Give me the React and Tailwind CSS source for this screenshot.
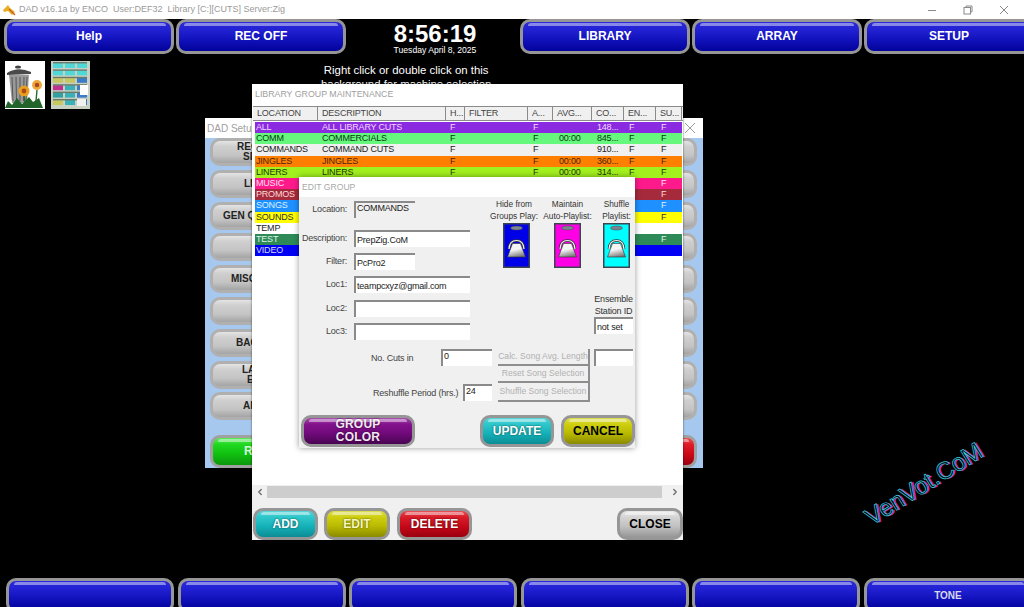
import React from "react";
import { ChevronLeft, ChevronRight } from "lucide-react";

const TONES = {
  blue: "bg-[linear-gradient(#2a2ad8_0%,#2222d4_26%,#1212bc_60%,#02029a_100%)] text-white",
  teal: "bg-[linear-gradient(#58d4d8_0%,#30c8cc_22%,#14b0b8_60%,#0c8c94_100%)] text-white [text-shadow:0_0_2px_#044]",
  yellow: "bg-[linear-gradient(#dcdc50_0%,#cfcf10_24%,#b8b800_60%,#8a8a00_100%)] text-[#f6f6c0] [text-shadow:0_0_2px_#440]",
  yellowDark: "bg-[linear-gradient(#dcdc50_0%,#cfcf10_24%,#b8b800_60%,#8a8a00_100%)] text-black",
  red: "bg-[linear-gradient(#e85058_0%,#d81c28_24%,#c40818_60%,#9a0010_100%)] text-white [text-shadow:0_0_2px_#400]",
  purple: "bg-[linear-gradient(#a850b0_0%,#84128c_24%,#700a7a_60%,#480452_100%)] text-[#f4e6f4] [text-shadow:0_0_2px_#202]",
  gray: "bg-[linear-gradient(#e8e8e8_0%,#d4d4d4_24%,#c0c0c0_60%,#969696_100%)] text-black",
  setup: "!border-[#b0b0b0] bg-[linear-gradient(#e4e4e4_0%,#cfcfcf_24%,#c4c4c4_65%,#a4a4a4_100%)] text-[#222]",
  green: "!border-[#a0a0a0] bg-[linear-gradient(#60e860_0%,#20d820_24%,#10c010_60%,#0c960c_100%)] text-[#d8f8d8]",
  redSoft: "!border-[#a0a0a0] bg-[linear-gradient(#e85058_0%,#e01c28_24%,#cc0818_60%,#9a0010_100%)] text-white",
};

const TXT = "text-[9px] tracking-[-0.2px]";

function Gloss({ tone, className, children }) {
  return (
    <div
      className={`relative shrink-0 flex items-center justify-center rounded-[10px] border-[3px] border-[#969696] font-bold text-[12px] leading-[13px] text-center ${TONES[tone]} ${className}`}
    >
      {tone !== "setup" && (
        <span className="absolute top-[1px] right-[5px] left-[5px] h-[3px] rounded-t-[6px] bg-white/45" />
      )}
      {children}
    </div>
  );
}

const ROWS = [
  ["ALL", "ALL LIBRARY CUTS", "F", "F", "", "148...", "F", "F", "bg-[#8a2be2] text-[#f2d8ff]"],
  ["COMM", "COMMERCIALS", "F", "F", "00:00", "845...", "F", "F", "bg-[#66f87c] text-[#0a3a14]"],
  ["COMMANDS", "COMMAND CUTS", "F", "F", "", "910...", "F", "F", "bg-[#f0f0f0] text-[#222]"],
  ["JINGLES", "JINGLES", "F", "F", "00:00", "360...", "F", "F", "bg-[#ff8000] text-[#4a2400]"],
  ["LINERS", "LINERS", "F", "F", "00:00", "314...", "F", "F", "bg-[#a2f01e] text-[#1c3c00]"],
  ["MUSIC", "", "", "", "", "", "", "F", "bg-[#ff1a8c] text-[#ffe0f0]"],
  ["PROMOS", "", "", "", "", "", "", "F", "bg-[#a52a3c] text-[#fbdada]"],
  ["SONGS", "", "", "", "", "", "", "F", "bg-[#1e90ff] text-[#dff0ff]"],
  ["SOUNDS", "", "", "", "", "", "", "F", "bg-[#ffff00] text-[#333]"],
  ["TEMP", "", "", "", "", "", "", "", "bg-white text-[#222]"],
  ["TEST", "", "", "", "", "", "", "F", "bg-[#2e8b57] text-[#dff5e6]"],
  ["VIDEO", "", "", "", "", "", "", "", "bg-[#0000f5] text-[#d8d8ff]"],
];

const HEAD = [
  ["LOCATION", "w-[65px]"],
  ["DESCRIPTION", "w-[128px]"],
  ["H...", "w-[19px]"],
  ["FILTER", "w-[63px]"],
  ["A...", "w-[25px]"],
  ["AVG...", "w-[39px]"],
  ["CO...", "w-[32px]"],
  ["EN...", "w-[32px]"],
  ["SU...", "w-[26px]"],
];

function Row({ r }) {
  return (
    <div className={`flex h-[11.2px] items-center leading-[11px] ${TXT} ${r[8]}`}>
      <span className="w-[63px] pl-[1px]">{r[0]}</span>
      <span className="w-[128px] pl-[4px]">{r[1]}</span>
      <span className="w-[19px] pl-[4px]">{r[2]}</span>
      <span className="w-[63px]"></span>
      <span className="w-[25px] pl-[5px]">{r[3]}</span>
      <span className="w-[39px] pl-[6px]">{r[4]}</span>
      <span className="w-[32px] pl-[5px]">{r[5]}</span>
      <span className="w-[32px] pl-[5px]">{r[6]}</span>
      <span className="w-[26px] pl-[5px]">{r[7]}</span>
    </div>
  );
}

function TrashIcon() {
  return (
    <svg width="40" height="48" viewBox="0 0 40 48" className="shrink-0">
      <rect width="40" height="48" fill="#fff" />
      <ellipse cx="13" cy="6" rx="3" ry="1.6" fill="#444" />
      <path d="M2 12 Q13 5 26 11 L26 13 L2 14 Z" fill="#4a4a4a" />
      <path d="M4 14 H24 L22 42 H7 Z" fill="#9a9a9a" />
      <path d="M7 16 L8 40 M11 16 L11.5 40 M15 16 L15 40 M19 16 L18.5 40 M22 16 L21 40" stroke="#555" strokeWidth="1" />
      <path d="M0 47 L3 40 L7 44 L12 37 L17 43 L24 36 L28 41 L34 37 L38 47 Z" fill="#23642a" />
      <circle cx="19" cy="30" r="5.5" fill="#e8a020" />
      <circle cx="19" cy="30" r="2.4" fill="#b04a10" />
      <circle cx="32" cy="24" r="5" fill="#eda838" />
      <circle cx="32" cy="24" r="2.2" fill="#a8442c" />
      <path d="M32 29 L31 40 M19 35 L20 41" stroke="#256b2c" strokeWidth="1.4" />
    </svg>
  );
}

function GridIcon() {
  const rows = ["#4fd8d8", "#4fd8d8", "#c8c860", "#c03090", "#30a0a0", "#c8c860"];
  return (
    <svg width="39" height="48" viewBox="0 0 39 48" className="shrink-0">
      <rect width="39" height="48" fill="#c8d0c4" />
      {rows.map((c, i) => (
        <g key={i}>
          <rect x="2" y={2 + i * 7.4} width="10" height="5" fill={c} />
          <rect x="14" y={2 + i * 7.4} width="10" height="5" fill={i > 2 ? "#3ab0b8" : c} />
          <rect x="26" y={2 + i * 7.4} width="10" height="5" fill={i > 1 ? "#3a7cc8" : c} />
          <rect x="2" y={1 + i * 7.4} width="34" height="1.4" fill="#6a7a6a" />
        </g>
      ))}
      <rect x="29" y="24" width="8" height="10" fill="#fff" />
      <rect x="26" y="38" width="9" height="7" fill="#f0f0f0" />
    </svg>
  );
}

function Bin({ color, gid }) {
  return (
    <svg width="27" height="45" viewBox="0 0 27 45" className="shrink-0">
      <defs>
        <linearGradient id={gid} x1="0.3" y1="0" x2="0.6" y2="1">
          <stop offset="0.45" stopColor="#f4f4f4" />
          <stop offset="1" stopColor="#777" />
        </linearGradient>
      </defs>
      <rect x="0.75" y="0.75" width="25.5" height="43.5" fill={color} stroke="#3c4450" strokeWidth="1.5" />
      <ellipse cx="13.5" cy="5" rx="6" ry="2" fill="#7c8490" stroke="#444" strokeWidth="0.5" />
      <path d="M6 26 Q6.5 17.5 13.5 17.5 Q20.5 17.5 21 26" fill="none" stroke="#333" strokeWidth="2.6" />
      <path d="M6 26 Q6.5 17.5 13.5 17.5 Q20.5 17.5 21 26" fill="none" stroke="#f4f4f4" strokeWidth="1.2" />
      <path d="M9.5 20.5 H17.5 L22.5 34 H4.5 Z" fill={`url(#${gid})`} stroke="#333" strokeWidth="0.6" />
    </svg>
  );
}

function Input({ className, children, gray }) {
  return (
    <div
      className={`flex items-center border-t-2 border-l-2 border-[#8a8a8a] pl-[1px] leading-[10px] text-[#222] ${TXT} ${gray ? "bg-[#f0f0f0]" : "bg-white"} ${className}`}
    >
      {children}
    </div>
  );
}

function Field({ label, className, children }) {
  return (
    <div className={`flex items-center gap-[7px] ${className}`}>
      <span className={`w-[48px] pt-[1px] text-right text-[#444] ${TXT}`}>{label}</span>
      {children}
    </div>
  );
}

function OffButton({ children, className }) {
  return (
    <div className={`flex w-[92px] items-center justify-center border-r-2 border-b-2 border-[#8e8e8e] text-[8.6px] whitespace-nowrap text-[#b0b0b0] ${className}`}>
      {children}
    </div>
  );
}

const SETUP_LABELS = [
  [["REC", "pl-[24px]"], ["SE", "pl-[30px]"]],
  [["LI", "pl-[31px]"]],
  [["GEN Q", "pl-[10px]"]],
  [],
  [["MISC", "pl-[18px]"]],
  [],
  [["BAC", "pl-[23px]"]],
  [["LA", "pl-[29px]"], ["E", "pl-[34px]"]],
  [["AI", "pl-[30px]"]],
];

export default function App() {
  return (
    <div className="relative flex h-[607px] w-[1024px] flex-col overflow-hidden bg-black font-['Liberation_Sans',Arial,sans-serif]">
      {/* App title bar */}
      <div className="flex h-[19px] shrink-0 items-center bg-white pl-[2px]">
        <svg width="14" height="12" viewBox="0 0 14 12" className="shrink-0">
          <path d="M1 6 L6 1 L8 4 L13 8 L10 11 L6 7 L2 8 Z" fill="#e8b020" />
          <path d="M7 5 L13 11" stroke="#d06020" strokeWidth="1.4" />
        </svg>
        <span className="ml-[3px] text-[9px] whitespace-pre text-[#9a9a9a]">DAD v16.1a by ENCO  User:DEF32  Library [C:][CUTS] Server:Zig</span>
        <div className="ml-auto flex items-center gap-[26px] pr-[15px]">
          <svg width="10" height="10" viewBox="0 0 10 10"><path d="M1 5.5 H9" stroke="#8a8a8a" /></svg>
          <svg width="10" height="10" viewBox="0 0 10 10" fill="none" stroke="#8a8a8a"><rect x="1" y="2.5" width="6.5" height="6.5" /><path d="M3 2.5 V1 H9 V7 H7.5" /></svg>
          <svg width="10" height="10" viewBox="0 0 10 10"><path d="M1 1 L9 9 M9 1 L1 9" stroke="#8a8a8a" /></svg>
        </div>
      </div>

      {/* Top button row */}
      <div className="flex h-[35px] shrink-0 items-stretch gap-[2px] pl-[4px]">
        <Gloss tone="blue" className="w-[170px]">Help</Gloss>
        <Gloss tone="blue" className="w-[170px]">REC OFF</Gloss>
        <div className="flex w-[170px] shrink-0 flex-col items-center pt-[3px] pl-[4px] text-white">
          <span className="text-[24px] leading-[24px] font-bold">8:56:19</span>
          <span className="text-[8.6px] leading-[9px]">Tuesday April 8, 2025</span>
        </div>
        <Gloss tone="blue" className="w-[170px]">LIBRARY</Gloss>
        <Gloss tone="blue" className="w-[170px]">ARRAY</Gloss>
        <Gloss tone="blue" className="w-[170px]">SETUP</Gloss>
      </div>

      {/* Desktop area */}
      <div className="flex flex-1 items-start">
        <div className="flex gap-[6px] pt-[7px] pl-[5px]">
          <TrashIcon />
          <GridIcon />
        </div>
        <div className="ml-[231px] pt-[9px] text-center text-[11.4px] leading-[14px] text-white">
          Right click or double click on this
          <br />
          background for machine selection
        </div>
      </div>

      {/* Bottom button row */}
      <div className="mb-[-6px] flex h-[35px] shrink-0 gap-[3.6px] pl-[6px]">
        <Gloss tone="blue" className="w-[168px]" />
        <Gloss tone="blue" className="w-[168px]" />
        <Gloss tone="blue" className="w-[168px]" />
        <Gloss tone="blue" className="w-[168px]" />
        <Gloss tone="blue" className="w-[168px]" />
        <Gloss tone="blue" className="w-[168px] !text-[10px] !text-[#d8d8f0]">TONE</Gloss>
      </div>

      {/* DAD Setup window */}
      <div className="absolute top-[118px] left-[205px] flex h-[350px] w-[498px] flex-col bg-[#a6c8ee]">
        <div className="flex h-[20px] shrink-0 items-center justify-between bg-white px-[2px] text-[10px] text-[#a0a0a0]">
          <span>DAD Setup</span>
          <svg width="12" height="12" viewBox="0 0 12 12" className="mr-[5px]"><path d="M1 1 L11 11 M11 1 L1 11" stroke="#9a9a9a" /></svg>
        </div>
        <div className="flex flex-1 justify-between pr-[6px] pl-[5px]">
          <div className="flex w-[100px] flex-col gap-[3.8px]">
            {SETUP_LABELS.map((lines, i) => (
              <Gloss key={i} tone="setup" className="h-[28px] w-[100px] flex-col !items-start !justify-center !text-left !text-[10px] !leading-[10px]">
                {lines.map(([t, c]) => (
                  <span key={t} className={c}>{t}</span>
                ))}
              </Gloss>
            ))}
            <Gloss tone="green" className="mt-[11px] h-[33px] w-[100px] !justify-start pl-[31px]">R</Gloss>
          </div>
          <div className="flex w-[60px] flex-col gap-[3.8px]">
            {SETUP_LABELS.map((_, i) => (
              <Gloss key={i} tone="setup" className="h-[28px] w-[60px]" />
            ))}
            <Gloss tone="redSoft" className="mt-[11px] h-[33px] w-[60px]" />
          </div>
        </div>
      </div>

      {/* Library group maintenance window */}
      <div className="absolute top-[84px] left-[252px] flex h-[456px] w-[431px] flex-col bg-white shadow-[0_0_2px_rgba(0,0,0,0.6)]">
        <div className="flex h-[22px] shrink-0 items-center pl-[3px] text-[8.8px] text-[#a0a0a0]">LIBRARY GROUP MAINTENANCE</div>
        <div className="ml-[1px] flex h-[15px] shrink-0 border-t border-b border-[#8a8a8a] bg-[#f0f0f0]">
          {HEAD.map(([t, w]) => (
            <span key={t} className={`${w} flex items-center border-r border-[#8a8a8a] pl-[4px] text-[#444] ${TXT}`}>{t}</span>
          ))}
        </div>
        <div className="mt-[1px] mr-[1px] ml-[3px] flex flex-col">
          {ROWS.map((r) => (
            <Row key={r[0]} r={r} />
          ))}
        </div>
        <div className="flex-1" />
        <div className="flex h-[13px] shrink-0 items-center bg-[#f0f0f0] px-[2px] text-[#666]">
          <ChevronLeft size={10} strokeWidth={3} className="ml-[1px]" />
          <div className="mx-[2px] h-[12px] w-[395px] bg-[#cdcdcd]" />
          <ChevronRight size={10} strokeWidth={3} className="ml-[6px]" />
        </div>
        <div className="flex h-[42px] shrink-0 items-start bg-[#f0f0f0] pt-[10px] pl-[1px]">
          <Gloss tone="teal" className="h-[32px] w-[65px]">ADD</Gloss>
          <Gloss tone="yellow" className="ml-[6px] h-[32px] w-[66px]">EDIT</Gloss>
          <Gloss tone="red" className="ml-[7px] h-[32px] w-[75px]">DELETE</Gloss>
          <Gloss tone="gray" className="ml-[145px] h-[32px] w-[66px]">CLOSE</Gloss>
        </div>
      </div>

      {/* Edit group window */}
      <div className="absolute top-[177px] left-[299px] flex h-[271px] w-[336px] flex-col bg-[#f0f0f0] shadow-[0_0_6px_rgba(0,0,0,0.4)]">
        <div className="flex h-[20px] shrink-0 items-center bg-white pl-[3px] text-[8.6px] text-[#a8a8a8]">EDIT GROUP</div>
        <div className="flex h-[143px] shrink-0">
          <div className="flex w-[171px] shrink-0 flex-col pt-[4px]">
            <Field label="Location:" className="h-[17px]"><Input gray className="h-[17px] w-[61px] !items-start">COMMANDS</Input></Field>
            <Field label="Description:" className="mt-[12px] h-[17px]"><Input className="h-[17px] w-[116px]">PrepZig.CoM</Input></Field>
            <Field label="Filter:" className="mt-[6px] h-[17px]"><Input className="h-[17px] w-[61px]">PcPro2</Input></Field>
            <Field label="Loc1:" className="mt-[6px] h-[17px]"><Input className="h-[17px] w-[116px]">teampcxyz@gmail.com</Input></Field>
            <Field label="Loc2:" className="mt-[7px] h-[17px]"><Input className="h-[17px] w-[116px]" /></Field>
            <Field label="Loc3:" className="mt-[6px] h-[17px]"><Input className="h-[17px] w-[116px]" /></Field>
          </div>
          <div className="flex w-[165px] shrink-0 flex-col">
            <div className="flex pt-[1px] pl-[15px] text-center text-[8.3px] leading-[12px] text-[#333]">
              <div className="flex w-[63px] shrink-0 flex-col items-center whitespace-nowrap">
                <span className="mr-[5px]">Hide from<br />Groups Play:</span>
                <div className="mt-[1px]"><Bin color="#0000e8" gid="b1" /></div>
              </div>
              <div className="flex w-[39px] shrink-0 flex-col items-center whitespace-nowrap">
                <span>Maintain<br />Auto-Playlist:</span>
                <div className="mt-[1px]"><Bin color="#ff00e6" gid="b2" /></div>
              </div>
              <div className="flex w-[59px] shrink-0 flex-col items-center whitespace-nowrap">
                <span>Shuffle<br />Playlist:</span>
                <div className="mt-[1px]"><Bin color="#00ffff" gid="b3" /></div>
              </div>
            </div>
            <div className={`mt-[25px] flex flex-col items-end pr-[2px] text-center leading-[12px] text-[#333] ${TXT}`}>
              <div className="w-[39px] whitespace-nowrap">Ensemble<br />Station ID</div>
              <Input className="h-[17px] w-[39px] text-left">not set</Input>
            </div>
          </div>
        </div>
        <div className="mt-[9px] flex shrink-0">
          <div className="flex w-[193px] shrink-0 flex-col">
            <div className="flex h-[17px] items-center">
              <span className={`ml-[72px] w-[70px] pt-[2px] text-[#444] ${TXT}`}>No. Cuts in</span>
              <Input className="h-[17px] w-[51px] !items-start">0</Input>
            </div>
            <div className="mt-[18px] flex h-[17px] items-center">
              <span className={`ml-[74px] w-[90px] pt-[2px] whitespace-nowrap text-[#444] ${TXT}`}>Reshuffle Period (hrs.)</span>
              <Input className="h-[17px] w-[29px] !items-start">24</Input>
            </div>
          </div>
          <div className="ml-[6px] flex flex-col">
            <OffButton className="h-[17px]">Calc. Song Avg. Length</OffButton>
            <OffButton className="h-[17px]">Reset Song Selection</OffButton>
            <OffButton className="h-[19px]">Shuffle Song Selection</OffButton>
          </div>
          <Input className="ml-[4px] h-[17px] w-[39px]" />
        </div>
        <div className="mt-[13px] flex items-start pl-[2px]">
          <Gloss tone="purple" className="h-[32px] w-[114px] tracking-[0.02em]">GROUP<br />COLOR</Gloss>
          <Gloss tone="teal" className="ml-[65px] h-[32px] w-[74px]">UPDATE</Gloss>
          <Gloss tone="yellowDark" className="ml-[7px] h-[32px] w-[74px]">CANCEL</Gloss>
        </div>
      </div>

      {/* Watermark */}
      <div className="absolute top-[470px] left-[858px] w-[122px] -rotate-[32deg] text-center text-[24px] leading-[34px] whitespace-nowrap text-black [-webkit-text-stroke:0.7px_#35d8e0] [text-shadow:1.5px_1px_0_#f020d0]">
        VenVot.CoM
      </div>
    </div>
  );
}
